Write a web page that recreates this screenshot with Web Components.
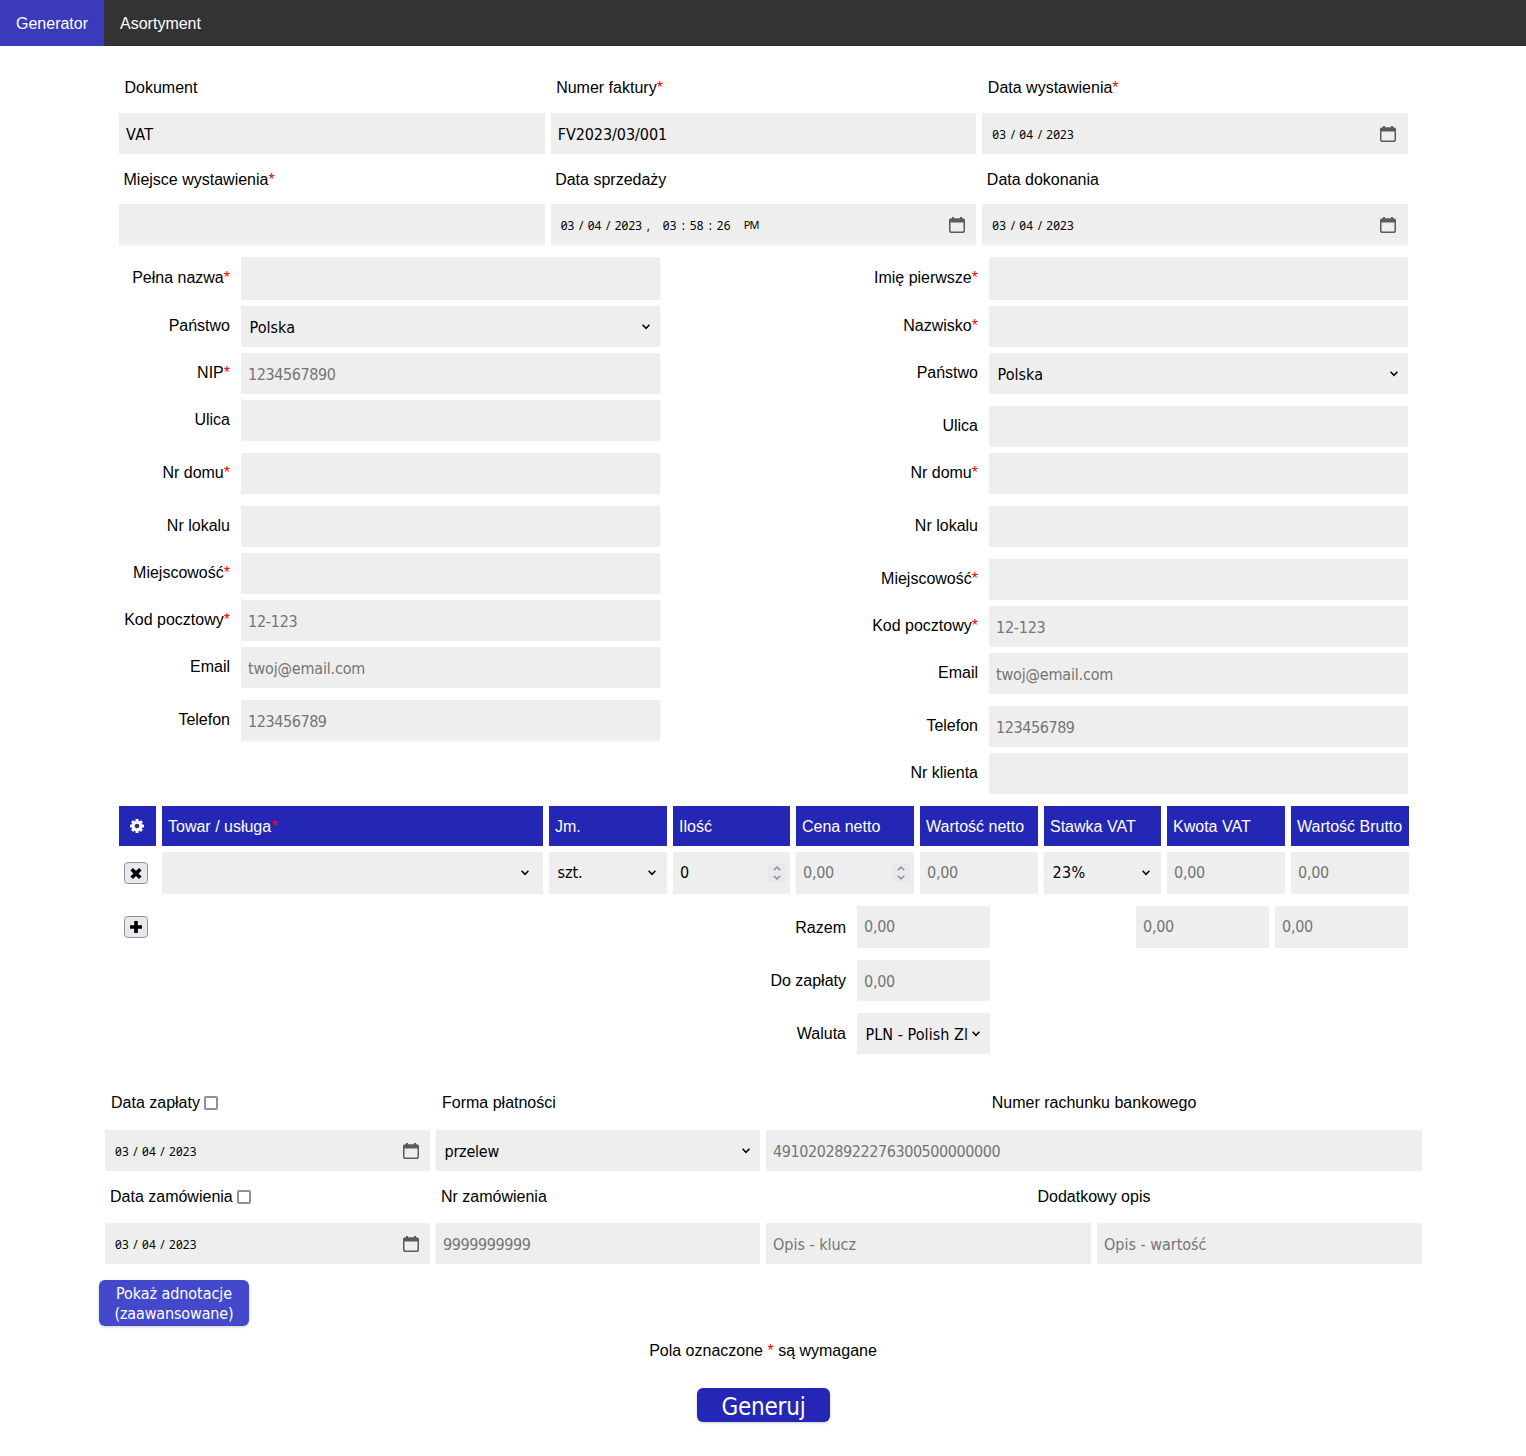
<!DOCTYPE html>
<html lang="pl">
<head>
<meta charset="utf-8">
<title>Generator</title>
<style>
body{margin:0;background:#fff;font:16px/20px "Liberation Sans",Arial,sans-serif;color:#000}
</style>
</head>
<body>
<invoice-app></invoice-app>
<script>
const UI_FONT = 'font-family:"DejaVu Sans Condensed","DejaVu Sans",sans-serif;font-stretch:condensed;';
const CHEVRON = '<svg width="8" height="6" viewBox="0 0 8 6"><path d="M.6 .8 4 4.3 7.4 .8" fill="none" stroke="#000" stroke-width="1.5"/></svg>';

function define(name, render) {
  customElements.define(name, class extends HTMLElement {
    connectedCallback() {
      if (this.shadowRoot) return;
      this.attachShadow({mode: 'open'}).innerHTML = render(this);
    }
  });
}

/* Text set to a fixed advance width by spacing its letters */
customElements.define('fit-text', class extends HTMLElement {
  connectedCallback() {
    if (this.shadowRoot) return;
    this.attachShadow({mode: 'open'}).innerHTML = '<style>:host{display:inline-block;white-space:pre}</style><slot></slot>';
    const w = parseFloat(this.getAttribute('w'));
    if (w) this.style.letterSpacing = ((w - this.getBoundingClientRect().width) / this.textContent.length).toFixed(3) + 'px';
  }
});

define('nav-item', e => `<style>:host{display:flex;align-items:center;height:46px;box-sizing:border-box;padding:2px 16px 0;color:#fff}
:host([active]){background:#3a3abb}</style><slot></slot>`);

define('nav-bar', () => `<style>:host{display:flex;height:46px;background:#333}</style><slot></slot>`);

define('field-label', e => `<style>:host{display:flex;align-items:center;white-space:pre;height:20px;box-sizing:border-box}
span{padding-top:2px}
b{font-weight:400;color:#f00}i{box-sizing:border-box;width:14px;height:14px;border:2px solid #8f8f9d;border-radius:2px;background:#fff;margin:1px 0 0 4px}</style>
<span><slot></slot>${e.hasAttribute('req') ? '<b>*</b>' : ''}</span>${e.hasAttribute('check') ? '<i></i>' : ''}`);

define('field-box', e => {
  const w = e.getAttribute('w') || '', t = e.getAttribute('text') || '', spin = e.hasAttribute('spin');
  return `<style>:host{display:flex;align-items:center;box-sizing:border-box;height:41px;background:#eee;padding:2px 4px 0 7px;${UI_FONT}color:#000;min-width:0}
:host([ph]){color:#757575}
span{flex:1;min-width:0}
div{display:flex;flex-direction:column;align-items:center;justify-content:center;gap:4px;width:18px;height:18px;background:#e9e9ed}</style>
<span>${t ? `<fit-text w="${w}">${t}</fit-text>` : ''}</span>${spin ? `<div>
<svg width="8" height="5" viewBox="0 0 8 5"><path d="M.8 4.2 4 1.2 7.2 4.2" fill="none" stroke="#9696a3" stroke-width="1.7"/></svg>
<svg width="8" height="5" viewBox="0 0 8 5"><path d="M.8.8 4 3.8 7.2.8" fill="none" stroke="#9696a3" stroke-width="1.7"/></svg></div>` : ''}`;
});

define('select-box', e => `<style>:host{display:flex;align-items:center;box-sizing:border-box;height:41px;background:#eee;padding:0 10px 0 8.5px;${UI_FONT}min-width:0}
span{flex:1;min-width:0;white-space:nowrap;padding-top:var(--drop,2px)}svg{flex:none}</style>
<span>${e.getAttribute('text') ? `<fit-text w="${e.getAttribute('w')}">${e.getAttribute('text')}</fit-text>` : ''}</span>${CHEVRON}`);

define('date-box', e => {
  const time = e.hasAttribute('time') ? '<u>,</u><s>03</s><i>:</i><s>58</s><i>:</i><s>26</s><s class="pm">PM</s>' : '';
  return `<style>:host{display:flex;align-items:center;box-sizing:border-box;height:41px;background:#eee;padding:0 12px 0 10px;min-width:0;
font-family:"Noto Sans",sans-serif;font-size:11.8px;font-feature-settings:"zero" 1}
:host([time]){padding-right:11px}
div{flex:1;display:flex}s,i,u{text-decoration:none;font-style:normal}
s{width:14px;letter-spacing:.15px}s.y{width:28px}i{width:13px;text-align:center}u{width:20.2px;box-sizing:border-box;padding-left:4px}
s.pm{margin-left:13px;font-size:11px;letter-spacing:-.9px;width:15px}</style>
<div><s>03</s><i>/</i><s>04</s><i>/</i><s class="y">2023</s>${time}</div>
<svg width="16" height="16" viewBox="0 0 16 16"><path d="M3 0h2v2H3zM11 0h2v2h-2z" fill="#5b5b5b"/><rect x=".75" y="2.25" width="14.5" height="13" rx="1.8" fill="none" stroke="#5b5b5b" stroke-width="1.5"/><path d="M0 5.5V3.3Q0 1.5 2 1.5h12q2 0 2 1.8v2.2z" fill="#5b5b5b"/></svg>`;
});

/* Right-aligned label followed by its control */
define('form-row', e => `<style>:host{display:flex;gap:11px;margin-bottom:6px}
:host([wide]){margin-bottom:12px}
field-label{width:111px;justify-content:flex-end;align-self:center;margin-top:var(--lift,-3px)}
::slotted(*){flex:1}</style>
<field-label ${e.hasAttribute('req') ? 'req' : ''}>${e.getAttribute('label')}</field-label><slot></slot>`);

define('head-cell', e => `<style>:host{display:flex;align-items:center;height:40px;box-sizing:border-box;padding:1px 0 0 6px;background:#2427b5;color:#fff;white-space:nowrap}
:host([icon]){padding:0 1px 1px 0;justify-content:center}b{font-weight:400;color:#f00}</style><slot></slot>${e.hasAttribute('req') ? '<b>*</b>' : ''}`);

define('icon-button', e => `<style>:host{display:flex;align-items:center;justify-content:center;box-sizing:border-box;width:24px;height:22px;border:1px solid #8f8f9d;border-radius:4px;background:#e9e9ed;margin-left:5px}</style>
<svg width="14" height="14" viewBox="0 0 14 14"><path d="${e.getAttribute('kind') === 'add' ? 'M7 1v12M1 7h12' : 'M2.7 3.2 11.3 11.8M11.3 3.2 2.7 11.8'}" stroke="#000" stroke-width="3.6"/></svg>`);

define('push-button', e => `<style>:host{display:flex;align-items:center;justify-content:center;text-align:center;box-sizing:border-box;color:#fff;border-radius:6px;${UI_FONT}box-shadow:0 1px 3px rgba(0,0,0,.2)}
:host([main]){width:133px;height:34px;background:#2427b5;font-size:24px;line-height:30px;padding-top:3px}
:host([soft]){width:150px;height:46px;background:#4448cb;padding-top:2px}</style><slot></slot>`);

define('invoice-app', () => {
  const teeth = [0,45,90,135,180,225,270,315].map(a => `<rect x="5.5" y="0" width="3" height="4" rx=".6" transform="rotate(${a} 7 7)"/>`).join('');
  const z = w => `<field-box ph text="0,00" w="31" ${w || ''}></field-box>`;
  return `<style>
:host{display:block;height:1456px}
.top{display:grid;grid-template-columns:repeat(3,1fr);column-gap:6px;width:1289px;margin:31px 0 0 119px}
.top field-label{margin:0 0 16px 5.5px}
.top .second{margin:15px 0 15px 4.5px}
.parties{display:flex;justify-content:space-between;width:1289px;margin:12px 0 0 119px;height:537px}
.parties>div{width:541px}
.tall{height:43px}
.items{display:grid;grid-template-columns:37px 381px 118px 117px 118px 118px 117px 118px 118px;gap:6px;margin:12px 0 0 119px;width:1290px;align-items:center}
.items>field-box,.items>select-box{height:42px;padding-top:0}
.items>select-box{padding-right:11px;--drop:0px}
.sum{display:flex;width:1289px;margin:12px 0 0 119px;height:148px}
.sum icon-button{margin-top:10px}
.totals{width:255px;margin-left:587px;--lift:-1px}
.totals .tall{height:42px;padding-top:0}
.vat{display:flex;gap:6px;margin-left:146px}
.vat field-box{width:133px;height:42px;padding-top:0}
.pay{display:grid;grid-template-columns:325px 324px 325px 325px;column-gap:6px;width:1317px;margin:38px 0 0 105px}
.pay date-box{padding-right:11px}
.pay field-label{margin:0 0 18px 6px}
.pay .second{margin:15px 0 17px 5px}
.span{grid-column:span 2}
.pay field-label.span{justify-content:center;margin-left:0}
.adv{margin:16px 0 0 99px}
.note{text-align:center;height:20px;margin-top:15px}.note b{font-weight:400;color:#f00}
.go{margin:27px 0 0 697px}
</style>
<nav-bar><nav-item active>Generator</nav-item><nav-item>Asortyment</nav-item></nav-bar>
<section class="top">
<field-label>Dokument</field-label><field-label req>Numer faktury</field-label><field-label req>Data wystawienia</field-label>
<field-box text="VAT" w="27.5"></field-box><field-box text="FV2023/03/001" w="109.5"></field-box><date-box></date-box>
<field-label class="second" req>Miejsce wystawienia</field-label><field-label class="second">Data sprzedaży</field-label><field-label class="second">Data dokonania</field-label>
<field-box></field-box><date-box time></date-box><date-box></date-box>
</section>
<section class="parties">
<div>
<form-row label="Pełna nazwa" req><field-box class="tall"></field-box></form-row>
<form-row label="Państwo"><select-box text="Polska" w="45.5"></select-box></form-row>
<form-row label="NIP" req><field-box ph text="1234567890" w="87.4"></field-box></form-row>
<form-row label="Ulica" wide><field-box></field-box></form-row>
<form-row label="Nr domu" req wide><field-box></field-box></form-row>
<form-row label="Nr lokalu"><field-box></field-box></form-row>
<form-row label="Miejscowość" req><field-box></field-box></form-row>
<form-row label="Kod pocztowy" req><field-box ph text="12-123" w="49.5"></field-box></form-row>
<form-row label="Email" wide><field-box ph text="twoj@email.com" w="117.2"></field-box></form-row>
<form-row label="Telefon"><field-box ph text="123456789" w="78.6"></field-box></form-row>
</div>
<div>
<form-row label="Imię pierwsze" req><field-box class="tall"></field-box></form-row>
<form-row label="Nazwisko" req><field-box></field-box></form-row>
<form-row label="Państwo" wide><select-box text="Polska" w="45.5"></select-box></form-row>
<form-row label="Ulica"><field-box></field-box></form-row>
<form-row label="Nr domu" req wide><field-box></field-box></form-row>
<form-row label="Nr lokalu" wide><field-box></field-box></form-row>
<form-row label="Miejscowość" req><field-box></field-box></form-row>
<form-row label="Kod pocztowy" req><field-box ph text="12-123" w="49.5"></field-box></form-row>
<form-row label="Email" wide><field-box ph text="twoj@email.com" w="117.2"></field-box></form-row>
<form-row label="Telefon"><field-box ph text="123456789" w="78.6"></field-box></form-row>
<form-row label="Nr klienta"><field-box></field-box></form-row>
</div>
</section>
<section class="items">
<head-cell icon><svg width="14" height="14" viewBox="0 0 14 14"><g fill="#fff">${teeth}</g><circle cx="7" cy="7" r="3.8" fill="none" stroke="#fff" stroke-width="3"/></svg></head-cell>
<head-cell req>Towar / usługa</head-cell><head-cell>Jm.</head-cell><head-cell>Ilość</head-cell><head-cell>Cena netto</head-cell><head-cell>Wartość netto</head-cell><head-cell>Stawka VAT</head-cell><head-cell>Kwota VAT</head-cell><head-cell>Wartość Brutto</head-cell>
<icon-button kind="remove"></icon-button><select-box style="padding-right:14px"></select-box><select-box text="szt." w="25"></select-box><field-box text="0" w="8.7" spin></field-box>${z('spin')}${z()}<select-box text="23%" w="33"></select-box>${z()}${z()}
</section>
<section class="sum">
<icon-button kind="add"></icon-button>
<div class="totals">
<form-row label="Razem" wide><field-box class="tall" ph text="0,00" w="31"></field-box></form-row>
<form-row label="Do zapłaty" wide>${z()}</form-row>
<form-row label="Waluta"><select-box text="PLN - Polish Zl" w="102.5"></select-box></form-row>
</div>
<div class="vat">${z()}${z()}</div>
</section>
<section class="pay">
<field-label check>Data zapłaty</field-label><field-label>Forma płatności</field-label><field-label class="span">Numer rachunku bankowego</field-label>
<date-box></date-box><select-box text="przelew" w="54.5"></select-box><field-box class="span" ph text="49102028922276300500000000" w="227.3"></field-box>
<field-label class="second" check>Data zamówienia</field-label><field-label class="second">Nr zamówienia</field-label><field-label class="second span">Dodatkowy opis</field-label>
<date-box></date-box><field-box ph text="9999999999" w="87.4"></field-box><field-box ph text="Opis - klucz" w="83"></field-box><field-box ph text="Opis - wartość" w="102.5"></field-box>
</section>
<push-button soft class="adv"><div><fit-text w="116">Pokaż adnotacje</fit-text><br><fit-text w="119">(zaawansowane)</fit-text></div></push-button>
<div class="note">Pola oznaczone <b>*</b> są wymagane</div>
<push-button main class="go"><fit-text w="84">Generuj</fit-text></push-button>`;
});
</script>
</body>
</html>
